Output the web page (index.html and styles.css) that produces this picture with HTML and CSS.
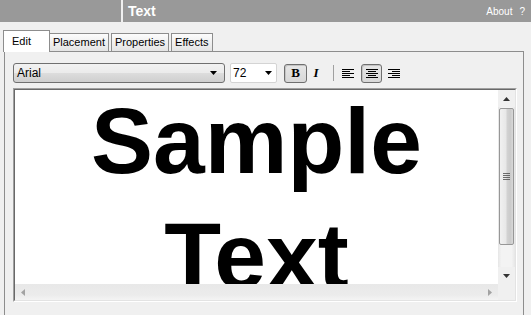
FILE: index.html
```html
<!DOCTYPE html>
<html>
<head>
<meta charset="utf-8">
<link rel="stylesheet" href="styles.css">
</head>
<body>
<div class="app">
  <header class="topbar">
    <div class="topbar-left"></div>
    <div class="topbar-main">
      <span class="title">Text</span>
      <span class="links"><span>About</span><span class="help">?</span></span>
    </div>
  </header>
  <nav class="tabs">
    <div class="tab active">Edit</div>
    <div class="tab">Placement</div>
    <div class="tab gap">Properties</div>
    <div class="tab gap">Effects</div>
  </nav>
  <section class="panel">
    <div class="toolbar">
      <div class="font-select">
        <span>Arial</span>
        <svg class="caret" width="7" height="4" viewBox="0 0 7 4"><path d="M0 0H7L3.5 4Z" fill="#000"/></svg>
      </div>
      <div class="size-select">
        <span>72</span>
        <svg class="caret" width="7" height="4" viewBox="0 0 7 4"><path d="M0 0H7L3.5 4Z" fill="#000"/></svg>
      </div>
      <div class="btn pressed bold-btn">B</div>
      <div class="btn italic-btn">I</div>
      <div class="sep"></div>
      <div class="btn align-btn">
        <svg width="12" height="9" viewBox="0 0 12 9"><g fill="#000"><rect x="0" y="0" width="12" height="1"/><rect x="0" y="2" width="8" height="1"/><rect x="0" y="4" width="12" height="1"/><rect x="0" y="6" width="8" height="1"/><rect x="0" y="8" width="12" height="1"/></g></svg>
      </div>
      <div class="btn pressed align-btn center-btn">
        <svg width="12" height="9" viewBox="0 0 12 9"><g fill="#000"><rect x="0" y="0" width="12" height="1"/><rect x="2" y="2" width="8" height="1"/><rect x="0" y="4" width="12" height="1"/><rect x="2" y="6" width="8" height="1"/><rect x="0" y="8" width="12" height="1"/></g></svg>
      </div>
      <div class="btn align-btn">
        <svg width="12" height="9" viewBox="0 0 12 9"><g fill="#000"><rect x="0" y="0" width="12" height="1"/><rect x="4" y="2" width="8" height="1"/><rect x="0" y="4" width="12" height="1"/><rect x="4" y="6" width="8" height="1"/><rect x="0" y="8" width="12" height="1"/></g></svg>
      </div>
    </div>
    <div class="editor">
      <div class="editor-inner">
        <div class="content"><div class="sample">Sample<br>Text</div></div>
        <div class="vscroll">
          <div class="arrow-btn"><svg width="7" height="4" viewBox="0 0 7 4"><path d="M3.5 0L7 4H0Z" fill="#333"/></svg></div>
          <div class="thumb"><div class="grip"></div></div>
          <div class="vtrack"></div>
          <div class="arrow-btn"><svg width="7" height="4" viewBox="0 0 7 4"><path d="M0 0H7L3.5 4Z" fill="#333"/></svg></div>
        </div>
        <div class="hscroll">
          <svg width="4" height="7" viewBox="0 0 4 7"><path d="M4 0V7L0 3.5Z" fill="#a3a3a3"/></svg>
          <svg width="4" height="7" viewBox="0 0 4 7"><path d="M0 0V7L4 3.5Z" fill="#a3a3a3"/></svg>
        </div>
        <div class="corner"></div>
      </div>
    </div>
  </section>
</div>
</body>
</html>
```

FILE: styles.css
```css
html, body {
  margin: 0;
  padding: 0;
  background: #f0f0f0;
}
.app {
  width: 531px;
  height: 315px;
  overflow: hidden;
  font-family: "Liberation Sans", Arial, sans-serif;
  color: #000;
}
.topbar {
  display: flex;
  height: 22px;
  gap: 2px;
}
.topbar-left {
  width: 121px;
  background: #999999;
}
.topbar-main {
  flex: 1;
  background: #999999;
  display: flex;
  align-items: center;
  justify-content: space-between;
  padding: 0 6px 0 5px;
}
.title {
  color: #fff;
  font-weight: bold;
  font-size: 14px;
}
.links {
  color: #fff;
  font-size: 10px;
  display: flex;
  gap: 7px;
  padding-top: 1px;
}
.tabs {
  display: flex;
  align-items: flex-end;
  margin-top: 9px;
  padding-left: 3px;
  height: 21px;
  position: relative;
  z-index: 1;
  margin-bottom: -1px;
}
.tab {
  height: 17px;
  line-height: 17px;
  font-size: 11px;
  padding: 0 3px;
  border: 1px solid #8d8d8d;
  border-bottom: none;
  background: linear-gradient(#fcfcfc, #e4e4e4);
  margin-bottom: 1px;
  box-sizing: content-box;
}
.tab.gap {
  margin-left: 2px;
}
.tab.active {
  height: 21px;
  line-height: 20px;
  background: #ffffff;
  padding: 0 18px 0 8px;
  margin-bottom: 0;
  border-color: #8d8d8d;
}
.tab + .tab:not(.gap) {
  border-left: none;
}
.panel {
  margin: 0 7px 0 4px;
  height: 260px;
  border: 1px solid #8d8d8d;
  padding: 11px 8px 0 8px;
  box-sizing: content-box;
}
.toolbar {
  display: flex;
  align-items: center;
  height: 20px;
  margin-left: 0;
}
.font-select {
  width: 212px;
  height: 20px;
  box-sizing: border-box;
  border: 1px solid #707070;
  border-radius: 3px;
  background: linear-gradient(#f2f2f2 0%, #ebebeb 50%, #dddddd 51%, #cfcfcf 100%);
  display: flex;
  align-items: center;
  justify-content: space-between;
  padding: 0 7px 0 3px;
  font-size: 12px;
}
.size-select {
  width: 47px;
  height: 20px;
  box-sizing: border-box;
  margin-left: 5px;
  border: 1px solid #d4d4d4;
  border-radius: 2px;
  background: #fff;
  display: flex;
  align-items: center;
  justify-content: space-between;
  padding: 0 4px 0 2px;
  font-size: 12px;
}
.caret {
  display: block;
}
.btn {
  height: 19px;
  box-sizing: border-box;
  display: flex;
  align-items: center;
  justify-content: center;
  border: 1px solid transparent;
  border-radius: 3px;
}
.btn.pressed {
  border-color: #6f6f6f;
  background: linear-gradient(#e6e6e6, #d8d8d8);
  box-shadow: inset 1px 1px 0 #c4c4c4;
}
.bold-btn {
  width: 23px;
  margin-left: 7px;
  font-family: "Liberation Serif", "Times New Roman", serif;
  font-weight: bold;
  font-size: 13px;
}
.italic-btn {
  width: 14px;
  margin-left: 2px;
  font-family: "Liberation Serif", "Times New Roman", serif;
  font-weight: bold;
  font-style: italic;
  font-size: 13px;
}
.sep {
  width: 1px;
  height: 16px;
  background: #a0a0a0;
  margin-left: 10px;
  margin-right: 3px;
}
.align-btn {
  width: 21px;
}
.center-btn {
  margin-left: 3px;
  margin-right: 1px;
}
.editor {
  margin-top: 5px;
  width: 504px;
  height: 214px;
  box-sizing: border-box;
  border: 1px solid;
  border-color: #a0a0a0 #ffffff #ffffff #a0a0a0;
}
.editor-inner {
  height: 100%;
  box-sizing: border-box;
  border: 1px solid;
  border-color: #696969 #e3e3e3 #e3e3e3 #696969;
  display: grid;
  grid-template-columns: 1fr 17px;
  grid-template-rows: 1fr 16px;
}
.content {
  background: #fff;
  overflow: hidden;
  text-align: center;
}
.sample {
  margin-top: -6px;
  font-size: 93px;
  line-height: 115px;
  font-weight: bold;
  font-family: "Liberation Sans", Arial, sans-serif;
  color: #000;
}
.vscroll {
  background: linear-gradient(90deg, #e6e6e6, #f3f3f3 20%, #f3f3f3 80%, #e6e6e6);
  display: flex;
  flex-direction: column;
}
.arrow-btn {
  height: 17px;
  display: flex;
  align-items: center;
  justify-content: center;
  background: #f0f0f0;
}
.thumb {
  height: 137px;
  margin: 1px 1px 0 1px;
  box-sizing: border-box;
  border: 1px solid #979797;
  border-radius: 2px;
  background: linear-gradient(90deg, #f1f1f1 0%, #e8e8e8 45%, #d2d2d2 55%, #cbcbcb 80%, #d9d9d9 100%);
  display: flex;
  align-items: center;
  justify-content: center;
}
.grip {
  width: 7px;
  height: 7px;
  background: repeating-linear-gradient(#4d4d4d 0 1px, transparent 1px 2px);
  opacity: 0.8;
}
.vtrack {
  flex: 1;
}
.hscroll {
  background: linear-gradient(#e8e8e8, #ececec 70%, #f4f4f4);
  display: flex;
  align-items: center;
  justify-content: space-between;
  padding: 0 6px 0 6px;
}
.corner {
  background: #f0f0f0;
}
```
